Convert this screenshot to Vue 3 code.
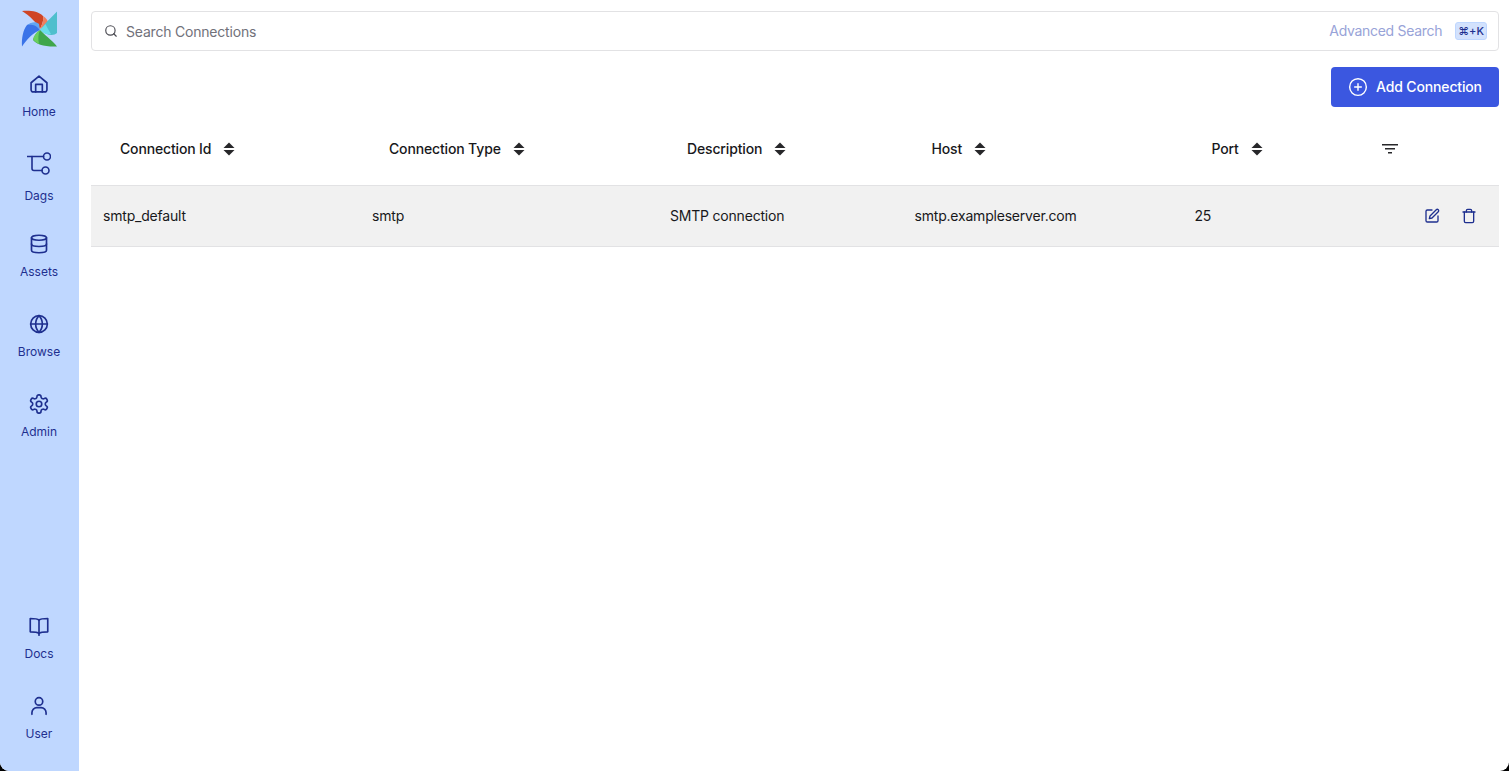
<script setup>
const columns = [
  { label: 'Connection Id', value: 'smtp_default' },
  { label: 'Connection Type', value: 'smtp' },
  { label: 'Description', value: 'SMTP connection' },
  { label: 'Host', value: 'smtp.exampleserver.com' },
  { label: 'Port', value: '25' },
]
</script>

<template>
  <div class="app">
    <aside class="sidebar">
      <svg class="logo" viewBox="0 0 36 36" width="36" height="36">
        <path fill="#cf4526" d="M0 0C8-.5 16 0 21 5C22 9 20 14 18 18C15 12 8 5 0 0Z" />
        <path fill="#f0805f" d="M21 5C24 7 26 9 26 12L18 18C20 14 22 9 21 5Z" />
        <path fill="#4fbfcd" d="M35 .5V22C32 25 25 25 18 19L23 13C26 9 31 5 35 .5Z" />
        <path fill="#6bdce8" d="M18 19L23.500 13C25 16 27 20 29 23C25 24 22 23 18 19Z" />
        <path fill="#3fa64a" d="M35 35.500C31 30 26 27 18 19C15 21 12 25 11 29C14 33 22 36 35 35.500Z" />
        <path fill="#6bcf5e" d="M18 19C14 21 12 25 11 28C12 30 15 32 17 33C16 28 16 23 18 19Z" />
        <path fill="#3a73e8" d="M0 35.500C-.5 27 1 19 5 14C9 11 14 12 18 19C11 22 5 28 0 35.500Z" />
        <path fill="#62a6f2" d="M5.500 14C9 11 14 10 17 13L18 19C14 14 10 13.500 5.500 14Z" />
      </svg>

      <nav class="nav">
        <a class="item">
          <svg class="icon" viewBox="0 0 24 24"><path d="M2.500 10.500 12 2.500l9.500 8V19a2.500 2.500 0 0 1-2.500 2.500H5A2.500 2.500 0 0 1 2.500 19z" /><path d="M8 21.500V12.500h8v9" /></svg>
          <span>Home</span>
        </a>
        <a class="item item-dags">
          <svg class="icon-dags" viewBox="0 0 24 24"><path d="M0.500 4.500h16" /><path d="M5 4.500v12a2 2 0 0 0 2 2h8" /><circle cx="20" cy="4.500" r="3.500" /><circle cx="18.500" cy="18.500" r="3.500" /></svg>
          <span>Dags</span>
        </a>
        <a class="item">
          <svg class="icon" viewBox="0 0 24 24"><ellipse cx="12" cy="4.500" rx="9" ry="3" /><path d="M3 4.500v15c0 1.700 4 3 9 3s9-1.300 9-3v-15" /><path d="M3 12c0 1.700 4 3 9 3s9-1.300 9-3" /></svg>
          <span>Assets</span>
        </a>
        <a class="item">
          <svg class="icon" viewBox="0 0 24 24"><circle cx="12" cy="12" r="10" /><path d="M2 12h20" /><path d="M12 2c2.600 2.700 4 6.300 4 10s-1.400 7.300-4 10c-2.600-2.700-4-6.300-4-10s1.400-7.300 4-10z" /></svg>
          <span>Browse</span>
        </a>
        <a class="item">
          <svg class="icon icon-gear" viewBox="0 0 24 24"><path d="M12.220 2h-.44a2 2 0 0 0-2 2v.18a2 2 0 0 1-1 1.730l-.43.250a2 2 0 0 1-2 0l-.150-.080a2 2 0 0 0-2.730.730l-.220.380a2 2 0 0 0 .730 2.730l.150.100a2 2 0 0 1 1 1.720v.510a2 2 0 0 1-1 1.740l-.150.090a2 2 0 0 0-.730 2.730l.220.380a2 2 0 0 0 2.730.730l.150-.080a2 2 0 0 1 2 0l.430.250a2 2 0 0 1 1 1.730V20a2 2 0 0 0 2 2h.44a2 2 0 0 0 2-2v-.18a2 2 0 0 1 1-1.730l.430-.250a2 2 0 0 1 2 0l.150.080a2 2 0 0 0 2.730-.730l.220-.390a2 2 0 0 0-.730-2.730l-.150-.080a2 2 0 0 1-1-1.740v-.500a2 2 0 0 1 1-1.740l.150-.090a2 2 0 0 0 .730-2.730l-.220-.380a2 2 0 0 0-2.730-.730l-.150.080a2 2 0 0 1-2 0l-.430-.250a2 2 0 0 1-1-1.730V4a2 2 0 0 0-2-2z" /><circle cx="12" cy="12" r="3" /></svg>
          <span>Admin</span>
        </a>
      </nav>

      <nav class="nav nav-bottom">
        <a class="item">
          <svg class="icon" viewBox="0 0 24 24"><path d="M12 5C10.500 3.500 8 3 1.500 3v16c6.500 0 9 .5 10.500 2 1.500-1.500 4-2 10.500-2V3C16 3 13.500 3.500 12 5z" /><path d="M12 5v18" /></svg>
          <span>Docs</span>
        </a>
        <a class="item">
          <svg class="icon" viewBox="0 0 24 24"><circle cx="12" cy="6.500" r="4.500" /><path d="M3.500 22v-2a6 6 0 0 1 6-6h5a6 6 0 0 1 6 6v2" /></svg>
          <span>User</span>
        </a>
      </nav>
    </aside>

    <main class="main">
      <div class="search">
        <svg class="search-icon" viewBox="0 0 24 24"><circle cx="11" cy="11" r="8" /><path d="m21 21-4.300-4.300" /></svg>
        <span class="search-text">Search Connections</span>
        <span class="advanced">Advanced Search</span>
        <kbd class="kbd">⌘+K</kbd>
      </div>

      <div class="toolbar">
        <button class="add">
          <svg class="add-icon" viewBox="0 0 24 24"><circle cx="12" cy="12" r="10" /><path d="M12 8v8M8 12h8" /></svg>
          <span class="add-label">Add Connection</span>
        </button>
      </div>

      <div class="table">
        <div class="row head">
          <div v-for="c in columns" :key="c.label" class="th">
            {{ c.label }}
            <svg class="sort" viewBox="0 0 12 14"><path d="M6 0.500 11.500 6H0.500z" /><path d="M6 13.500 0.500 8h11z" /></svg>
          </div>
          <div class="th-filter">
            <svg class="filter" viewBox="0 0 16 10"><path d="M0 0h16v1.500H0zM3 4h10v1.500H3zM6 8h4v1.500H6z" /></svg>
          </div>
        </div>
        <div class="row body">
          <div v-for="c in columns" :key="c.label" class="td">{{ c.value }}</div>
          <div class="actions">
            <svg class="action" viewBox="0 0 24 24"><path d="M12 3H5a2 2 0 0 0-2 2v14a2 2 0 0 0 2 2h14a2 2 0 0 0 2-2v-7" /><path d="M18.400 2.600a2.100 2.100 0 1 1 3 3L12 15l-4 1 1-4z" /></svg>
            <svg class="action" viewBox="0 0 24 24"><path d="M3 6h18" /><path d="M19 6v14a2 2 0 0 1-2 2H7a2 2 0 0 1-2-2V6" /><path d="M8 6V4a2 2 0 0 1 2-2h4a2 2 0 0 1 2 2v2" /></svg>
          </div>
        </div>
      </div>
    </main>
  </div>
</template>

<style>
html, body { margin: 0; background: #000; }
</style>

<style scoped>
.app {
  display: flex;
  height: 771px;
  overflow: hidden;
  background: #fff;
  border-radius: 0 0 9px 9px;
  font-family: Inter, "Liberation Sans", sans-serif;
  font-size: 14px;
  letter-spacing: -0.2px;
  color: #18181b;
}
.sidebar {
  width: 79px;
  flex: none;
  background: #bfd7ff;
  display: flex;
  flex-direction: column;
  align-items: center;
  padding: 0 1px 5px 0;
  box-sizing: border-box;
}
.logo { margin: 11px 0 17px 2px; overflow: visible; }
.nav { width: 100%; }
.nav-bottom { margin-top: auto; }
.item {
  height: 80px;
  box-sizing: border-box;
  display: flex;
  flex-direction: column;
  align-items: center;
  padding-top: 10px;
  gap: 10px;
  font-size: 12px;
  line-height: 16px;
  letter-spacing: 0;
  color: #1e2f8f;
}
.item-dags { padding-top: 8px; gap: 12px; }
.icon, .icon-dags {
  fill: none;
  stroke: #1e2f8f;
  stroke-width: 2;
  stroke-linecap: round;
  stroke-linejoin: round;
}
.icon { width: 20px; height: 20px; }
.icon-gear { width: 22px; height: 22px; margin: -1px 0; stroke-width: 1.800; }
.icon-dags { width: 24px; height: 24px; stroke-width: 1.600; }
.main {
  flex: 1;
  min-width: 0;
  padding: 11px 10px 0 12px;
}
.search {
  height: 40px;
  box-sizing: border-box;
  border: 1px solid #e2e2e4;
  border-radius: 4px;
  display: flex;
  align-items: center;
  padding: 0 11px 0 12px;
}
.search-icon {
  width: 14px;
  height: 14px;
  fill: none;
  stroke: #4b4b52;
  stroke-width: 2;
  stroke-linecap: round;
  margin-right: 8px;
}
.search-text { flex: 1; color: #71717a; }
.advanced { color: #98a3d8; margin: 0 13px 1px 0; letter-spacing: -0.3px; }
.kbd {
  font-family: Inter, "DejaVu Sans", sans-serif;
  font-size: 11px;
  font-weight: 500;
  line-height: 16px;
  letter-spacing: 0;
  color: #1e2f8f;
  background: #d3e2fd;
  border: 1px solid #bfd7ff;
  border-radius: 3px;
  padding: 0 2px;
}
.toolbar {
  display: flex;
  justify-content: flex-end;
  margin-top: 16px;
}
.add {
  height: 40px;
  width: 168px;
  border: 0;
  border-radius: 4px;
  background: #3b57e0;
  color: #fff;
  font: 500 14px Inter, sans-serif;
  letter-spacing: -0.15px;
  display: flex;
  align-items: center;
  justify-content: center;
  gap: 8px;
}
.add-label { padding-bottom: 2px; }
.add-icon {
  width: 20px;
  height: 20px;
  fill: none;
  stroke: #fff;
  stroke-width: 1.700;
  stroke-linecap: round;
}
.row {
  display: grid;
  grid-template-columns: 269px 298px 244.500px 280px 1fr 1fr;
  align-items: center;
}
.head { height: 79px; border-bottom: 1px solid #e2e2e4; padding-top: 5px; box-sizing: border-box; }
.th {
  padding-left: 29px;
  font-weight: 450;
  letter-spacing: -0.15px;
  display: flex;
  align-items: center;
  gap: 12px;
  height: 72px;
}
.sort { width: 12px; height: 14px; fill: #27272a; }
.th-filter { padding-left: 41.500px; }
.filter { width: 16px; height: 10px; fill: #27272a; display: block; }
.body {
  height: 61px;
  background: #f1f1f1;
  border-bottom: 1px solid #e2e2e4;
  box-sizing: border-box;
}
.td { padding: 0 0 2px 12px; }
.actions {
  display: flex;
  justify-content: flex-end;
  gap: 21px;
  padding-right: 22px;
}
.action {
  width: 16px;
  height: 16px;
  fill: none;
  stroke: #1e2f8f;
  stroke-width: 2;
  stroke-linecap: round;
  stroke-linejoin: round;
}
</style>
